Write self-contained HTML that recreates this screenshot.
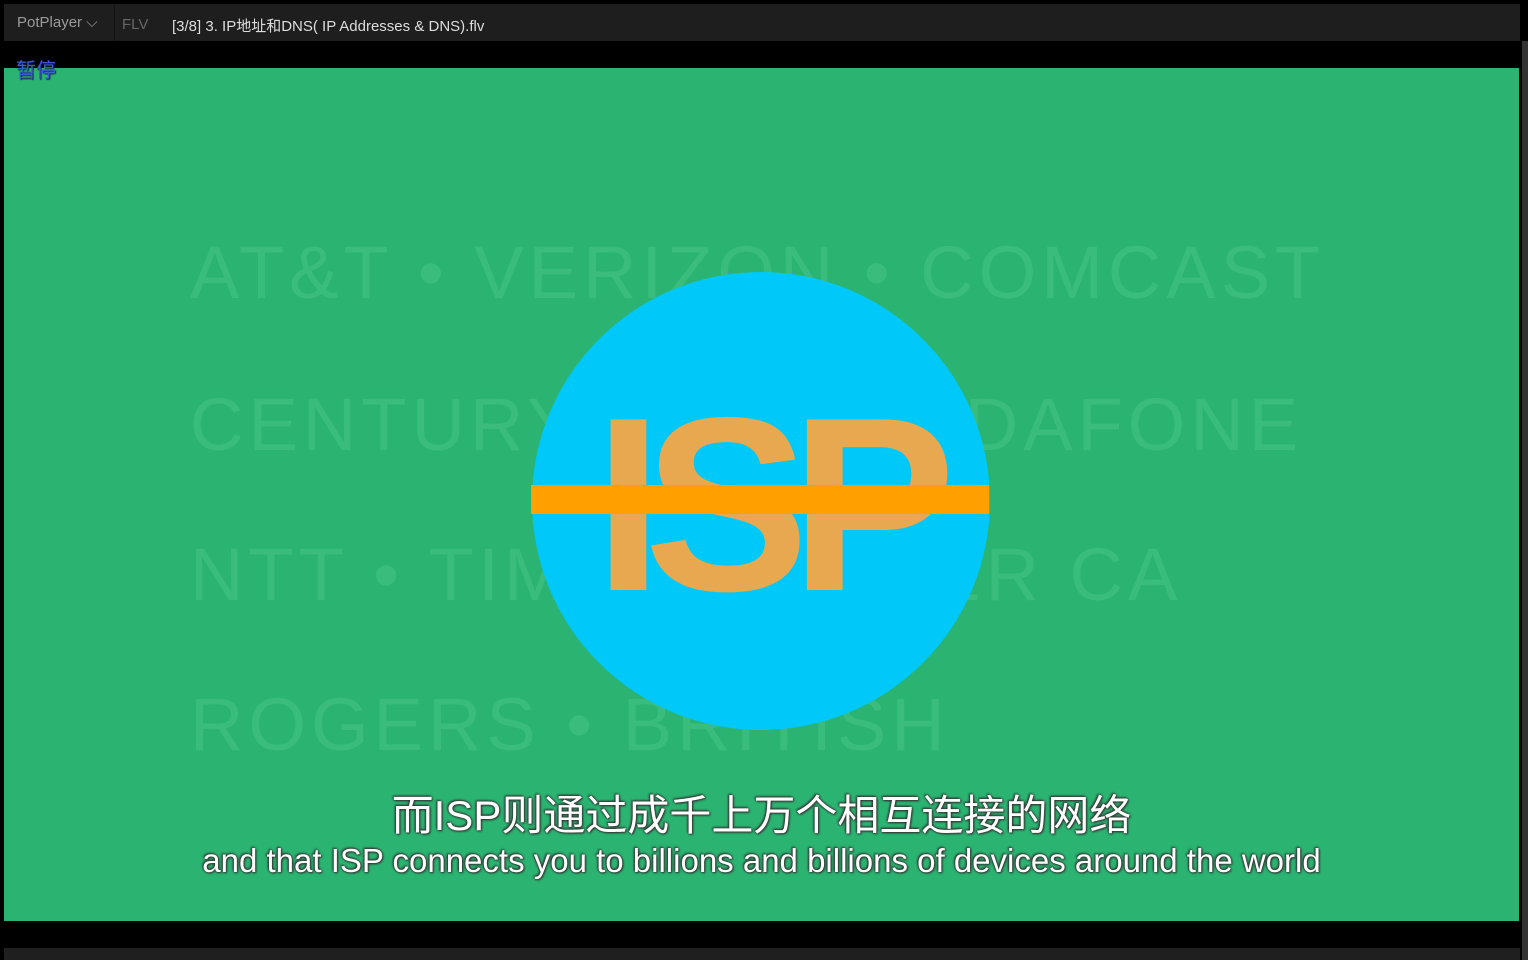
<!DOCTYPE html>
<html><head><meta charset="utf-8"><style>
body{margin:0;width:1528px;height:960px;background:#000;overflow:hidden;position:relative;font-family:"Liberation Sans","Noto Sans CJK SC",sans-serif}
.top{position:absolute;left:4px;top:4px;width:1516px;height:37px;background:#1e1e1e}
.pp{position:absolute;left:13px;top:10px;color:#9a9a9a;font-size:15px}
.sep{position:absolute;left:110px;top:0;width:1px;height:37px;background:#111}
.flv{position:absolute;left:118px;top:12px;color:#666;font-size:15px}
.ttl{position:absolute;left:168px;top:11px;color:#ddd;font-size:15px}
.green{position:absolute;left:4px;top:68px;width:1515px;height:853px;background:#2bb471;overflow:hidden}
.bg{position:absolute;color:#3ec07f;font-size:74px;letter-spacing:5px;white-space:nowrap;opacity:.8}
.circ{position:absolute;left:528px;top:204px;width:458px;height:458px;border-radius:50%;background:#00c8f8}
.isp{position:absolute;left:590px;top:312px;font-size:248px;font-weight:bold;color:#e8a84f;letter-spacing:-19px;line-height:1}
.bar{position:absolute;left:527px;top:417px;width:458px;height:29px;background:#ffa000}
.sub{position:absolute;width:1515px;text-align:center;color:#fff;text-shadow:0 0 2px #333,1px 1px 2px #333,-1px -1px 2px #333;white-space:nowrap}
.rs{position:absolute;left:1522px;top:41px;width:6px;height:919px;background:#333}
.bot{position:absolute;left:4px;top:948px;width:1516px;height:12px;background:#1f1f1f}
</style></head><body>
<div class="top"><span class="pp">PotPlayer ⌵</span><div class="sep"></div><span class="flv">FLV</span><span class="ttl">[3/8] 3. IP地址和DNS( IP Addresses &amp; DNS).flv</span></div>
<div class="green">
<div class="bg" style="left:186px;top:162px">AT&amp;T • VERIZON • COMCAST</div>
<div class="bg" style="left:186px;top:314px">CENTURYLINK • VODAFONE</div>
<div class="bg" style="left:186px;top:464px">NTT • TIM • CHARTER CA</div>
<div class="bg" style="left:186px;top:614px">ROGERS • BRITISH</div>
<div class="circ"></div>
<div class="isp">ISP</div>
<div class="bar"></div>
<div class="sub" style="top:714px;font-size:42px;left:0">而ISP则通过成千上万个相互连接的网络</div>
<div class="sub" style="top:774px;font-size:33px">and that ISP connects you to billions and billions of devices around the world</div>
</div>
<div style="position:absolute;left:16px;top:54px;color:#3a5ad8;font-size:20px;font-family:'Noto Sans CJK SC',sans-serif;text-shadow:1px 1px 1px #123">暂停</div>
<div class="rs"></div>
<div class="bot"></div>
</body></html>
